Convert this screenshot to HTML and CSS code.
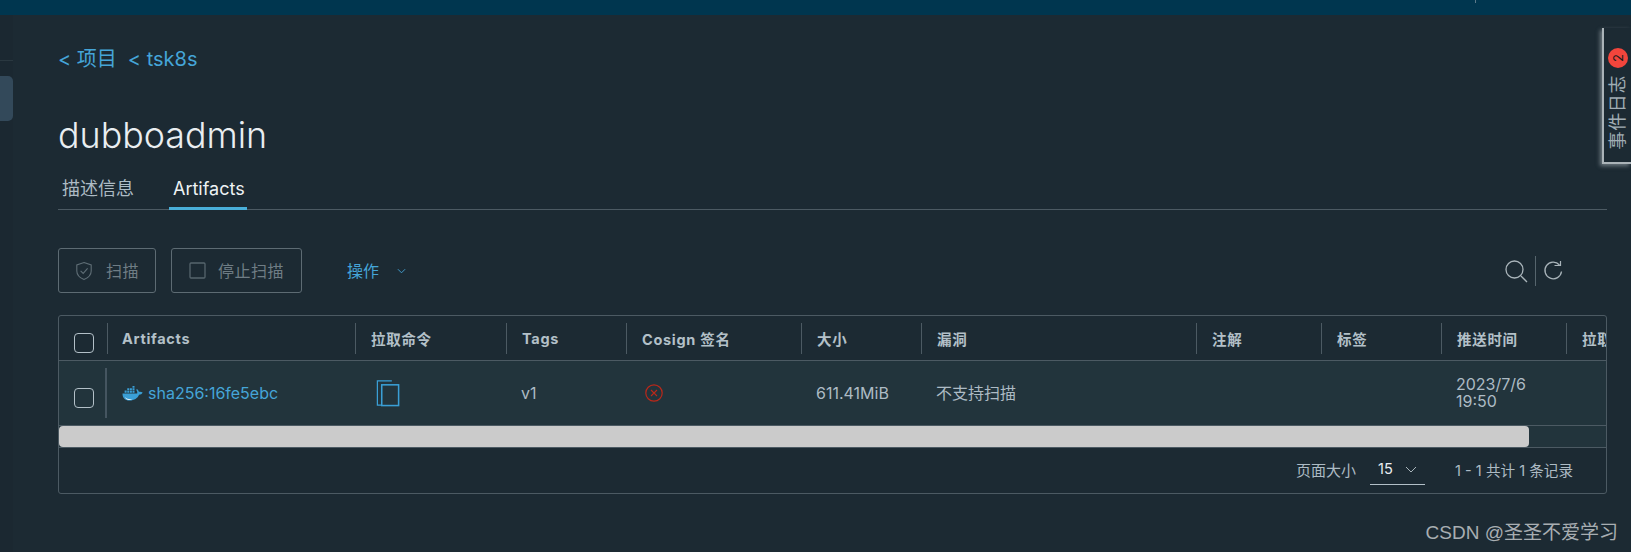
FILE: index.html
```html
<!DOCTYPE html>
<html lang="zh">
<head>
<meta charset="utf-8">
<title>dubboadmin</title>
<link rel="stylesheet" href="styles.css">
</head>
<body>
<header class="topbar"><span class="topbar-tick"></span></header>
<div class="shell">
  <aside class="sidebar"><span class="side-line"></span><span class="side-handle"></span></aside>
  <main class="content">
    <nav class="crumbs"><a>&lt; 项目</a><a>&lt; tsk8s</a></nav>
    <h1 class="title">dubboadmin</h1>
    <div class="tabs">
      <span class="tab">描述信息</span>
      <span class="tab tab-active">Artifacts</span>
    </div>
    <div class="toolbar">
      <button class="btn btn-scan">
        <svg class="btn-icon" viewBox="0 0 18 20" width="18" height="20"><path d="M9 1.5 L16.2 4 V10 C16.2 14.5 12.8 17 9 18.6 C5.2 17 1.8 14.5 1.8 10 V4 Z M5.6 9.8 L8.2 12.4 L12.6 7.4" fill="none" stroke="#5f6e76" stroke-width="1.1"/></svg>
        <span class="btn-label">扫描</span>
      </button>
      <button class="btn btn-stop">
        <svg class="btn-icon" viewBox="0 0 17 17" width="17" height="17"><rect x="1" y="1" width="15" height="15" rx="1" fill="none" stroke="#56656d" stroke-width="1.3"/></svg>
        <span class="btn-label">停止扫描</span>
      </button>
      <span class="action"><span class="btn-label">操作</span>
        <svg viewBox="0 0 10 6" width="9" height="6"><path d="M1 1 L5 5 L9 1" fill="none" stroke="#45a5d8" stroke-width="1"/></svg>
      </span>
      <span class="tools">
        <svg viewBox="0 0 24 24" width="24" height="24"><circle cx="10.5" cy="10.5" r="8.5" fill="none" stroke="#a9b4ba" stroke-width="1.3"/><path d="M17 17 L23 23" stroke="#a9b4ba" stroke-width="1.3"/></svg>
        <span class="tools-sep"></span>
        <svg viewBox="0 0 20 20" width="20" height="20"><path d="M16.5 4 A8.3 8.3 0 1 0 18.5 10.5" fill="none" stroke="#a9b4ba" stroke-width="1.3"/><path d="M11.5 4.5 H17.5 V0" fill="none" stroke="#a9b4ba" stroke-width="1.2"/></svg>
      </span>
    </div>
    <section class="grid">
      <div class="row row-head">
        <div class="cell cell-check"><span class="checkbox"></span></div>
        <div class="cell c1 sep">Artifacts</div>
        <div class="cell c2 sep">拉取命令</div>
        <div class="cell c3 sep">Tags</div>
        <div class="cell c4 sep">Cosign 签名</div>
        <div class="cell c5 sep">大小</div>
        <div class="cell c6 sep">漏洞</div>
        <div class="cell c7 sep">注解</div>
        <div class="cell c8 sep">标签</div>
        <div class="cell c9 sep">推送时间</div>
        <div class="cell c10 sep">拉取时间</div>
      </div>
      <div class="row row-body">
        <div class="cell cell-check"><span class="checkbox"></span><span class="row-sep"></span></div>
        <div class="cell c1">
          <svg class="whale" viewBox="0 0 24 17" width="21" height="15"><path d="M0.6 8.4 H17.3 C17.8 6.8 17.2 5.4 16.3 4.4 L17 3.4 C18.2 4.2 19 5.4 19.3 6.6 C20.8 6.3 22.2 6.5 23.6 7.4 C22.8 9.3 21.2 9.9 19.5 10 C17.8 14 14 16.6 8.8 16.6 C3 16.6 0.4 12.8 0.6 8.4 Z" fill="#3a9fd6"/><path d="M3.2 12.4 C6 15 9.5 15.3 12 14.6 C10 16.6 5.5 16.8 3.2 12.4 Z" fill="#dff0f8"/><path d="M3 5.2 H5.3 V7.6 H3 Z M6 5.2 H8.3 V7.6 H6 Z M9 5.2 H11.3 V7.6 H9 Z M12 5.2 H14.3 V7.6 H12 Z M6 2.4 H8.3 V4.6 H6 Z M9 2.4 H11.3 V4.6 H9 Z M12 2.4 H14.3 V4.6 H12 Z M12 0 H14.3 V1.9 H12 Z" fill="#3a9fd6"/></svg>
          <a class="link">sha256:16fe5ebc</a>
        </div>
        <div class="cell c2">
          <svg class="copy" viewBox="0 0 24 28" width="24" height="27"><path d="M5.5 26 H1 V1 H16" fill="none" stroke="#3a9fd6" stroke-width="1.3"/><rect x="5.5" y="5" width="17.5" height="21.5" fill="none" stroke="#3a9fd6" stroke-width="1.6"/></svg>
        </div>
        <div class="cell c3">v1</div>
        <div class="cell c4">
          <svg class="err" viewBox="0 0 18 18" width="18" height="18"><circle cx="9" cy="9" r="8.2" fill="none" stroke="#b9281a" stroke-width="1.2"/><path d="M6 6 L12 12 M12 6 L6 12" stroke="#b9281a" stroke-width="1.1"/></svg>
        </div>
        <div class="cell c5">611.41MiB</div>
        <div class="cell c6">不支持扫描</div>
        <div class="cell c7"></div>
        <div class="cell c8"></div>
        <div class="cell c9">2023/7/6<br>19:50</div>
        <div class="cell c10"></div>
      </div>
      <div class="scrollbar"><span class="thumb"></span></div>
      <footer class="pager">
        <span class="page-label">页面大小</span>
        <span class="select">15
          <svg viewBox="0 0 12 7" width="12" height="7"><path d="M1 1 L6 6 L11 1" fill="none" stroke="#a9b4ba" stroke-width="1"/></svg>
        </span>
        <span class="count">1 - 1 共计 1 条记录</span>
      </footer>
    </section>
  </main>
</div>
<div class="drawer"><span class="badge">2</span><span class="drawer-text">事件日志</span></div>
<div class="watermark">CSDN @圣圣不爱学习</div>
</body>
</html>
```
FILE: styles.css
```css
* { box-sizing: border-box; }
html, body { margin: 0; height: 100%; }
body {
  width: 1631px;
  height: 552px;
  overflow: hidden;
  background: #1c2a33;
  color: #adbbc4;
  font-family: Inter, "Noto Sans CJK SC", sans-serif;
  font-size: 16px;
  display: flex;
  flex-direction: column;
}
.topbar { height: 15px; flex: none; background: #00364f; display: flex; justify-content: flex-end; }
.topbar-tick { width: 1px; height: 3px; margin-right: 155px; background: #5c7a8a; }
.shell { flex: 1; display: flex; min-height: 0; }
.sidebar { width: 13px; flex: none; background: #1b2831; display: flex; flex-direction: column; }
.side-line { height: 1px; margin-top: 45px; background: #2a3840; }
.side-handle { height: 45px; margin-top: 15px; background: #33495a; border-radius: 0 5px 5px 0; }
.content { flex: 1; padding: 0 24px 0 45px; min-width: 0; }
.crumbs { height: 28px; margin-top: 30px; display: flex; gap: 11px; font-size: 20px; line-height: 28px; color: #45a5d8; }
.title { margin: 39px 0 0; height: 46px; font-size: 35.8px; line-height: 46px; font-weight: 300; color: #e9eef1; }
.tabs { height: 43px; margin-top: 9px; border-bottom: 1px solid #4c5a63; display: flex; align-items: stretch; }
.tab { padding: 10px 4px 0; margin-right: 26px; font-size: 18px; line-height: 24px; color: #adbbc4; white-space: nowrap; }
.tab-active { height: 43px; width: 78px; color: #eef2f4; border-bottom: 3px solid #49afd9; margin-left: 5px; }
.toolbar { height: 45px; margin-top: 38px; display: flex; align-items: center; }
.btn {
  height: 45px;
  padding: 0;
  background: transparent;
  border: 1px solid #5d6b73;
  border-radius: 3px;
  color: #6f7d85;
  font: inherit;
  letter-spacing: .5px;
  display: flex;
  align-items: center;
  justify-content: flex-start;
}
.btn-label { margin-bottom: 2px; }
.btn-scan { width: 98px; padding-left: 16px; gap: 13px; }
.btn-stop { width: 131px; margin-left: 15px; padding-left: 17px; gap: 12px; }
.action { margin-left: 45px; color: #45a5d8; display: flex; align-items: center; gap: 18px; }
.tools { margin-left: auto; margin-right: 44px; display: flex; align-items: center; gap: 7px; }
.tools-sep { width: 1px; height: 30px; background: #56656d; }
.grid { height: 179px; margin-top: 22px; border: 1px solid #4c5a63; border-radius: 3px; overflow: hidden; }
.row { display: flex; }
.row-head { height: 45px; border-bottom: 1px solid #4c5a63; font-weight: 700; font-size: 14.5px; letter-spacing: .7px; color: #b3c0c8; align-items: center; }
.row-body { height: 64px; background: #22343c; align-items: center; }
.cell { flex: none; padding-left: 15px; display: flex; align-items: center; }
.sep { height: 31px; border-left: 1px solid #4c5a63; white-space: nowrap; }
.row-head .c1 { padding-left: 14px; }
.cell-check { width: 48px; position: relative; }
.checkbox { width: 20px; height: 20px; border: 1px solid #b3c0c8; border-radius: 4px; margin-top: 10px; }
.row-body .cell-check { align-self: stretch; }
.row-body .checkbox { margin-top: 10px; }
.row-sep { position: absolute; left: 46px; top: 7px; width: 2px; height: 50px; background: #455560; }
.c1 { width: 248px; }
.c2 { width: 151px; }
.c3 { width: 120px; }
.c4 { width: 175px; }
.c5 { width: 120px; }
.c6 { width: 275px; }
.c7 { width: 125px; }
.c8 { width: 120px; }
.c9 { width: 125px; }
.c10 { width: 120px; }
.row-body .cell { line-height: 17px; }
.whale { margin-right: 5px; }
.link { color: #45a5d8; white-space: nowrap; }
.copy { margin-left: 6px; }
.err { margin-left: 4px; }
.scrollbar { height: 23px; background: #22343c; border-top: 1px solid #4c5a63; border-bottom: 1px solid #4c5a63; }
.thumb { display: block; width: 1470px; height: 21px; background: #cbcbcb; border-radius: 4px; }
.pager { height: 45px; display: flex; align-items: center; justify-content: flex-end; font-size: 14.6px; padding: 0 33px 2px 0; }
.page-label { font-size: 15px; }
.select { width: 55px; height: 30px; margin-left: 14px; padding: 0 8px; border-bottom: 1px solid #b3c0c8; display: flex; align-items: center; justify-content: space-between; color: #e9eef1; }
.count { margin-left: 30px; }
.drawer {
  position: absolute;
  left: 1602px;
  top: 28px;
  width: 29px;
  height: 136px;
  border-left: 2px solid #aab3b8;
  border-bottom: 2px solid #aab3b8;
  box-shadow: -2px 2px 4px rgba(190, 200, 205, .5);
  display: flex;
  flex-direction: column;
  align-items: center;
  padding-top: 20px;
  background: #1c2a33;
}
.drawer-text { writing-mode: vertical-rl; text-orientation: sideways; transform: rotate(180deg); font-size: 18px; letter-spacing: .6px; color: #a0adb4; line-height: 20px; }
.badge { writing-mode: vertical-rl; text-orientation: sideways; transform: rotate(180deg); width: 20px; height: 20px; flex: none; border-radius: 50%; background: #f2453c; color: #1c1c1c; font-size: 13px; display: flex; align-items: center; justify-content: center; margin-bottom: 7px; }
.watermark { position: absolute; right: 13px; bottom: 7px; font-family: "Liberation Sans", "Noto Sans CJK SC", sans-serif; font-size: 19px; line-height: 24px; color: #a8aeb2; }
```
